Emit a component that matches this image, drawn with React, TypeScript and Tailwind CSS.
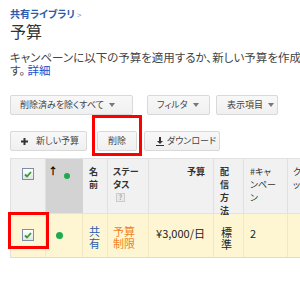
import React from 'react'

const FONT = { fontFamily: '"Noto Sans CJK JP", "Noto Sans", sans-serif' }

function Caret() {
  return <span className="ml-[5px] inline-block h-0 w-0 border-x-[3px] border-t-[4px] border-x-transparent border-t-[#777] align-middle" />
}

function Btn({ children, className = '' }: { children: React.ReactNode; className?: string }) {
  return (
    <div
      className={`flex h-[20px] items-center rounded-[2px] border border-[#d9d9d9] bg-gradient-to-b from-[#f8f8f8] to-[#f0f0f0] text-[9px] text-[#444] ${className}`}
    >
      {children}
    </div>
  )
}

function Check() {
  return (
    <div className="flex h-[12px] w-[12px] items-center justify-center border border-[#7d8ea8] bg-gradient-to-b from-white to-[#e4e4e4]">
      <svg width="8" height="7" viewBox="0 0 8 7">
        <path d="M1 3.5 L3 5.5 L7 1" fill="none" stroke="#2f9e2f" strokeWidth="1.8" />
      </svg>
    </div>
  )
}

export default function App() {
  return (
    <div
      className="relative h-[291px] w-[300px] overflow-hidden bg-white pl-[10px] pt-[8px] [font-feature-settings:'palt']"
      style={FONT}
    >
      {/* breadcrumb */}
      <div className="text-[10px] leading-[12px]">
        <span className="font-bold text-[#2a5db0]">共有ライブラリ</span>
        <span className="ml-[2px] text-[8px] text-[#6f8fca]">&gt;</span>
      </div>
      <h1 className="text-[16px] leading-[20px] text-[#333]">予算</h1>

      <div className="mt-[10px] text-[11.5px] leading-[13px] text-[#444]">
        <div className="whitespace-nowrap">キャンペーンに以下の予算を適用するか、新しい予算を作成しま</div>
        <div>
          す。 <span className="text-[#15c]">詳細</span>
        </div>
      </div>

      {/* toolbar 1 */}
      <div className="mt-[18px] flex">
        <Btn className="w-[123px] pl-[9px]">
          削除済みを除くすべて
          <Caret />
        </Btn>
        <Btn className="ml-[14px] w-[63px] pl-[9px]">
          フィルタ
          <Caret />
        </Btn>
        <Btn className="ml-[6px] w-[62px] pl-[10px]">
          表示項目
          <Caret />
        </Btn>
      </div>

      {/* toolbar 2 */}
      <div className="mt-[16px] flex">
        <Btn className="w-[77px] pl-[10px]">
          <svg width="7" height="7" viewBox="0 0 7 7" className="mr-[8px]">
            <path d="M3.5 0 V7 M0 3.5 H7" stroke="#333" strokeWidth="2" />
          </svg>
          新しい予算
        </Btn>
        <Btn className="ml-[10px] w-[40px] justify-center">削除</Btn>
        <Btn className="ml-[7px] w-[76px] pl-[11px]">
          <svg width="8" height="9" viewBox="0 0 8 9" className="mr-[3px]">
            <path d="M4 0 V5" stroke="#333" strokeWidth="2" />
            <path d="M1 4 H7 L4 7 Z" fill="#333" />
            <path d="M0 8.5 H8" stroke="#333" strokeWidth="1" />
          </svg>
          ダウンロード
        </Btn>
      </div>

      {/* table */}
      <div className="mt-[7px] w-[340px] border-l border-[#e0e0e0]">
        <div className="flex h-[56px] border-y border-[#e2e2e2] bg-[#f1f1f1] text-[9px] font-bold leading-[13px] text-[#333]">
          <div className="flex w-[35px] justify-center border-r border-[#e0e0e0] pt-[9px]">
            <Check />
          </div>
          <div className="relative w-[37px] bg-[#d3d3d3]">
            <span className="absolute left-[2px] top-[5px] text-[10px] font-bold text-black">↑</span>
            <span className="absolute left-[18px] top-[14px] h-[6px] w-[6px] rounded-full bg-[#1faa4f]" />
          </div>
          <div className="w-[25px] border-r border-[#e0e0e0] pl-[6px] pt-[6px]">
            名<br />前
          </div>
          <div className="w-[41px] border-r border-[#e0e0e0] pl-[5px] pt-[6px]">
            ステー<br />タス
            <div className="mt-[2px] ml-[3px] flex h-[9px] w-[9px] items-center justify-center border border-[#ccc] bg-[#e9e9e9] text-[7px] font-normal leading-none text-[#888]">
              ?
            </div>
          </div>
          <div className="w-[65px] border-r border-[#e0e0e0] pr-[8px] pt-[6px] text-right">予算</div>
          <div className="w-[30px] border-r border-[#e0e0e0] pl-[6px] pt-[6px]">
            配<br />信<br />方<br />法
          </div>
          <div className="w-[44px] border-r border-[#e0e0e0] pl-[6px] pt-[6px] font-normal">
            #キャ<br />ンペー<br />ン
          </div>
          <div className="w-[50px] pl-[5px] pt-[6px] font-normal">
            クリ<br />ック
          </div>
        </div>

        <div className="flex h-[44px] border-b border-[#dcdcdc] bg-[#fef6d3] text-[11px] leading-[12px] text-[#222]">
          <div className="flex w-[35px] justify-center border-r border-[#f1e8c2] pt-[15px]">
            <Check />
          </div>
          <div className="w-[37px] border-r border-[#f1e8c2] pl-[10px] pt-[18px]">
            <div className="h-[7px] w-[7px] rounded-full bg-[#1faa4f]" />
          </div>
          <div className="w-[25px] border-r border-[#f1e8c2] pl-[6px] pt-[11px] text-[#2a5db0]">
            共<br />有
          </div>
          <div className="w-[41px] border-r border-[#f1e8c2] pl-[5px] pt-[11px] text-[#f0821e]">
            予算<br />制限
          </div>
          <div className="w-[65px] border-r border-[#f1e8c2] pr-[8px] pt-[13px] text-right">¥3,000/日</div>
          <div className="w-[30px] border-r border-[#f1e8c2] pl-[7px] pt-[12px]">
            標<br />準
          </div>
          <div className="w-[44px] border-r border-[#f1e8c2] pl-[6px] pt-[13px]">2</div>
          <div className="w-[50px]" />
        </div>
      </div>

      {/* annotation boxes */}
      <div className="absolute left-[92px] top-[115px] h-[41px] w-[50px] border-[3px] border-[#ff0000]" />
      <div className="absolute left-[8px] top-[212px] h-[37px] w-[41px] border-[3px] border-[#ff0000]" />
    </div>
  )
}
